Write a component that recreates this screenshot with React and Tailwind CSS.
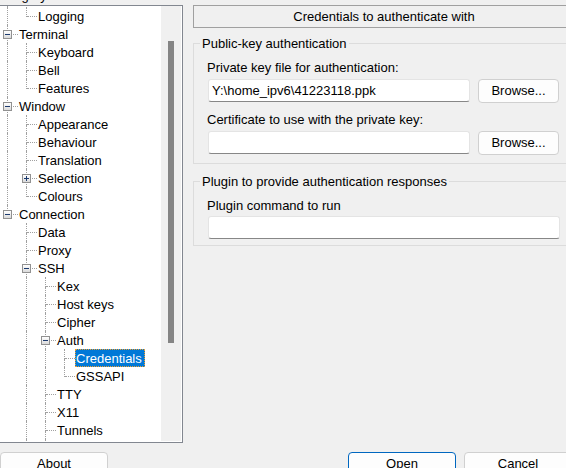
import React from 'react';

const TREE = [
  { label: 'Session', children: [{ label: 'Logging' }] },
  { label: 'Terminal', children: [{ label: 'Keyboard' }, { label: 'Bell' }, { label: 'Features' }] },
  {
    label: 'Window',
    children: [
      { label: 'Appearance' },
      { label: 'Behaviour' },
      { label: 'Translation' },
      { label: 'Selection', collapsed: true, children: [{ label: 'Copy' }] },
      { label: 'Colours' },
    ],
  },
  {
    label: 'Connection',
    children: [
      { label: 'Data' },
      { label: 'Proxy' },
      {
        label: 'SSH',
        children: [
          { label: 'Kex' },
          { label: 'Host keys' },
          { label: 'Cipher' },
          { label: 'Auth', children: [{ label: 'Credentials', selected: true }, { label: 'GSSAPI' }] },
          { label: 'TTY' },
          { label: 'X11' },
          { label: 'Tunnels' },
          { label: 'Bugs' },
          { label: 'More bugs' },
        ],
      },
      { label: 'Serial' },
      { label: 'Telnet' },
      { label: 'Rlogin' },
      { label: 'SUPDUP' },
    ],
  },
];

function flatten(nodes, guides = [], out = []) {
  nodes.forEach((n, i) => {
    const last = i === nodes.length - 1;
    out.push({ ...n, guides, last, first: guides.length === 0 && i === 0 });
    if (n.children && !n.collapsed) flatten(n.children, [...guides, !last], out);
  });
  return out;
}

function Expander({ open }) {
  return (
    <span className="absolute left-[3px] top-[5px] flex h-[9px] w-[9px] items-center justify-center border border-[#919191] bg-linear-to-b from-white to-[#dadada]">
      <span className="relative h-px w-[5px] bg-[#1c3a6e]">
        {!open && <span className="absolute left-[2px] top-[-2px] h-[5px] w-px bg-[#1c3a6e]" />}
      </span>
    </span>
  );
}

function TreeRow({ row }) {
  return (
    <div className="flex h-[18px] whitespace-nowrap">
      {row.guides.map((g, i) => (
        <span key={i} className="relative w-[19px] shrink-0">
          {g && <span className="absolute left-[7px] top-0 h-full border-l border-dotted border-[#a0a0a0]" />}
        </span>
      ))}
      <span className="relative w-[19px] shrink-0">
        {!row.first && <span className="absolute left-[7px] top-0 h-[10px] border-l border-dotted border-[#a0a0a0]" />}
        {!row.last && <span className="absolute bottom-0 left-[7px] top-[10px] border-l border-dotted border-[#a0a0a0]" />}
        <span className="absolute left-[8px] top-[9px] w-[10px] border-t border-dotted border-[#a0a0a0]" />
        {row.children && <Expander open={!row.collapsed} />}
      </span>
      <span
        className={
          row.selected
            ? '-ml-px h-[18px] border border-dotted border-[#f0a030] bg-[#0078d7] pr-[2px] leading-[17px] text-white'
            : '-ml-px h-[18px] border border-transparent pr-[2px] leading-[17px]'
        }
      >
        {row.label}
      </span>
    </div>
  );
}

function Field({ width, value }) {
  return (
    <input
      readOnly
      value={value || ''}
      className={`${width} ml-px h-[23px] rounded-[3px] border border-[#e4e4e4] border-b-[#878787] bg-white pl-[3px] outline-none`}
    />
  );
}

function Button({ children, className }) {
  return (
    <button
      type="button"
      className={`h-[24px] shrink-0 rounded-[4px] border bg-[#fdfdfd] leading-[20px] ${className}`}
    >
      {children}
    </button>
  );
}

export default function App() {
  const rows = flatten(TREE);
  return (
    <div className="h-[468px] w-[566px] overflow-hidden bg-[#f0f0f0] font-['Liberation_Sans',Arial,sans-serif] text-[13px] leading-[15px] text-black">
      <div className="flex w-[576px] flex-col">
        <div className="flex items-start">
          <div className="-ml-px w-[184px] shrink-0">
            <div className="-mt-[12px] ml-[-5px] h-[15px]">Category:</div>
            <div className="mt-[2px] flex h-[438px] border border-[#828790] bg-white pb-px pr-px">
              <div className="w-[161px] overflow-hidden">
                <div className="-mt-[17px]">
                  {rows.map((r, i) => (
                    <TreeRow key={i} row={r} />
                  ))}
                </div>
              </div>
              <div className="w-[20px] bg-[#f0f0f0] pl-[7px] pt-[35px]">
                <div className="h-[302px] w-[6px] bg-[#858585]" />
              </div>
            </div>
          </div>

          <div className="ml-[10px] mt-[5px] w-[382px] shrink-0">
            <div className="flex h-[23px] items-center justify-center border border-[#a0a0a0]">
              Credentials to authenticate with
            </div>

            <fieldset className="mt-[8px] border border-[#dcdcdc] pb-[8px]">
              <legend className="ml-[6px] px-[2px] leading-[15px]">Public-key authentication</legend>
              <div className="pl-[13px]">
                <div className="mt-[9px]">Private key file for authentication:</div>
                <div className="mt-[4px] flex items-start">
                  <Field width="w-[262px]" value={'Y:\\home_ipv6\\41223118.ppk'} />
                  <Button className="ml-[8px] w-[81px] border-[#d0d0d0]">Browse...</Button>
                </div>
                <div className="mt-[9px]">Certificate to use with the private key:</div>
                <div className="mt-[4px] flex items-start">
                  <Field width="w-[262px]" />
                  <Button className="ml-[8px] w-[81px] border-[#d0d0d0]">Browse...</Button>
                </div>
              </div>
            </fieldset>

            <fieldset className="mt-[10px] border border-[#dcdcdc] pb-[6px]">
              <legend className="ml-[6px] px-[2px] leading-[15px]">Plugin to provide authentication responses</legend>
              <div className="pl-[13px]">
                <div className="mt-[9px]">Plugin command to run</div>
                <div className="mt-[3px] flex">
                  <Field width="w-[352px]" />
                </div>
              </div>
            </fieldset>
          </div>
        </div>

        <div className="mt-[9px] flex">
          <Button className="w-[108px] border-[#d0d0d0]">About</Button>
          <Button className="ml-[240px] w-[108px] border-[#0067c0]">Open</Button>
          <Button className="ml-[8px] w-[108px] border-[#d0d0d0]">Cancel</Button>
        </div>
      </div>
    </div>
  );
}
